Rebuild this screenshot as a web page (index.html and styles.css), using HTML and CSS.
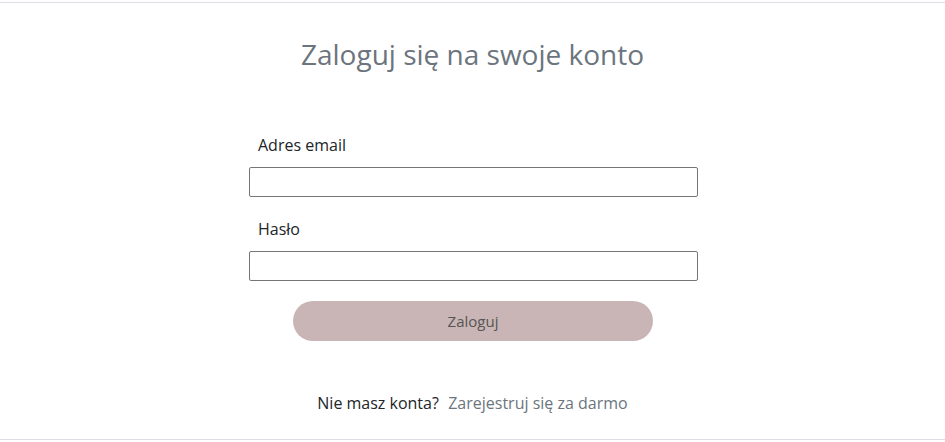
FILE: index.html
```html
<!DOCTYPE html>
<html lang="pl">
<head>
<meta charset="utf-8">
<title>Zaloguj się</title>
<link rel="stylesheet" href="styles.css">
</head>
<body>
<main class="page">
  <h1 class="title">Zaloguj się na swoje konto</h1>
  <form class="form">
    <label class="label" for="email">Adres email</label>
    <input class="input" id="email" type="email">
    <label class="label label-pass" for="pass">Hasło</label>
    <input class="input" id="pass" type="password">
    <button class="btn" type="button">Zaloguj</button>
  </form>
  <p class="signup">Nie masz konta?&nbsp; <a class="signup-link" href="#">Zarejestruj się za darmo</a></p>
</main>
</body>
</html>
```

FILE: styles.css
```css
html, body {
  margin: 0;
  padding: 0;
  background: #ffffff;
}
body {
  font-family: "Open Sans", "Liberation Sans", sans-serif;
  color: #212529;
}
.page {
  margin-top: 2px;
  height: 436px;
  border-top: 1px solid #dfdce6;
  border-bottom: 1px solid #dfdce6;
  display: flex;
  flex-direction: column;
  align-items: center;
}
.title {
  margin: 32px 0 0 0;
  font-size: 28px;
  font-weight: 400;
  line-height: 38px;
  color: #6c757d;
}
.form {
  margin-top: 60px;
  margin-left: 2px;
  width: 449px;
  display: flex;
  flex-direction: column;
  align-items: stretch;
}
.label {
  font-size: 16px;
  line-height: 24px;
  padding-left: 9px;
  margin-bottom: 10px;
}
.label-pass {
  margin-top: 20px;
}
.input {
  box-sizing: border-box;
  height: 30px;
  margin: 0;
  border: 1px solid #767676;
  border-radius: 2px;
  background: #fff;
  font-family: inherit;
  font-size: 16px;
  padding: 0 8px;
}
.btn {
  align-self: flex-start;
  margin: 20px 0 0 44px;
  width: 360px;
  height: 40px;
  border: none;
  border-radius: 20px;
  background: #c9b5b5;
  color: #555555;
  font-family: inherit;
  font-size: 15px;
  cursor: pointer;
}
.signup {
  margin: 50px 0 0 0;
  font-size: 16px;
  line-height: 24px;
  color: #212529;
}
.signup-link {
  margin-left: 1px;
  color: #6c757d;
  text-decoration: none;
}
```
